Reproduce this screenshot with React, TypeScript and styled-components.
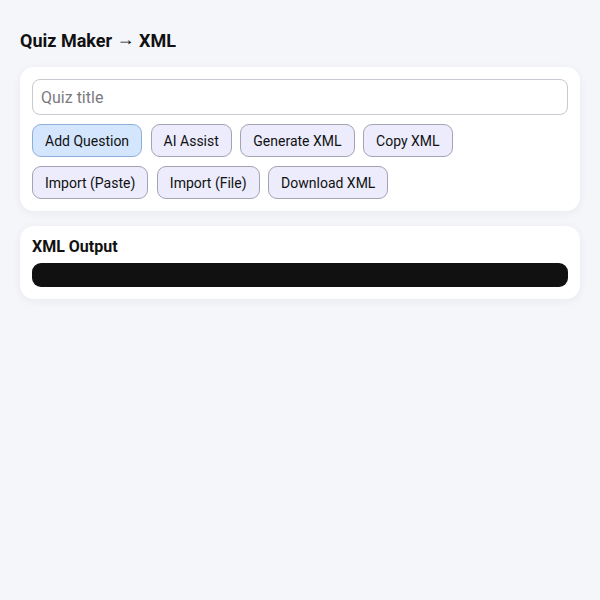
import styled, { createGlobalStyle } from 'styled-components';

const GlobalStyle = createGlobalStyle`
  html, body {
    margin: 0;
    padding: 0;
    background: #f5f6fa;
    font-family: Roboto, "Noto Sans", "Liberation Sans", sans-serif;
    color: #111;
  }
  * { box-sizing: border-box; }
`;

const Page = styled.div`
  width: 600px;
  min-height: 600px;
  padding: 20px 20px;
  display: flex;
  flex-direction: column;
  gap: 15px;
`;

const Title = styled.h1`
  margin: 10px 0 0;
  height: 22px;
  font-size: 18px;
  font-weight: 700;
  line-height: 22px;
`;

const Arrow = styled.span`
  line-height: 18px;
  vertical-align: 2px;
`;

const Card = styled.section`
  background: #fff;
  border-radius: 14px;
  padding: 12px;
  box-shadow: 0 2px 10px rgba(20, 30, 60, 0.06);
  display: flex;
  flex-direction: column;
  gap: 9px;
`;

const TitleInput = styled.input`
  width: 100%;
  height: 36px;
  border: 1px solid #c9c9d2;
  border-radius: 8px;
  padding: 0 8px;
  font-family: inherit;
  font-size: 16px;
  color: #111;
  outline: none;
  &::placeholder { color: #7a7a80; }
`;

const ButtonRow = styled.div`
  display: flex;
  flex-wrap: wrap;
  gap: 9px 8.5px;
`;

const Button = styled.button<{ $primary?: boolean }>`
  height: 33px;
  padding: 0 12px;
  border-radius: 9px;
  border: 1px solid ${(p) => (p.$primary ? '#8eaedc' : '#a3a3b4')};
  background: ${(p) => (p.$primary ? '#d4e6fd' : '#ececfc')};
  font-family: inherit;
  font-size: 14px;
  color: #111;
  cursor: pointer;
`;

const OutputCard = styled(Card)`
  gap: 7px;
`;

const SectionHeading = styled.h2`
  margin: 0;
  font-size: 16px;
  font-weight: 700;
  line-height: 18px;
`;

const Output = styled.pre`
  margin: 0;
  height: 24px;
  background: #111;
  border-radius: 9px;
  color: #eee;
`;

const buttons = ['AI Assist', 'Generate XML', 'Copy XML', 'Import (Paste)', 'Import (File)', 'Download XML'];

export default function App() {
  return (
    <>
      <GlobalStyle />
      <Page>
        <Title>
          Quiz Maker <Arrow>→</Arrow> XML
        </Title>
        <Card>
          <TitleInput placeholder="Quiz title" />
          <ButtonRow>
            <Button $primary>Add Question</Button>
            {buttons.map((b) => (
              <Button key={b}>{b}</Button>
            ))}
          </ButtonRow>
        </Card>
        <OutputCard>
          <SectionHeading>XML Output</SectionHeading>
          <Output />
        </OutputCard>
      </Page>
    </>
  );
}
